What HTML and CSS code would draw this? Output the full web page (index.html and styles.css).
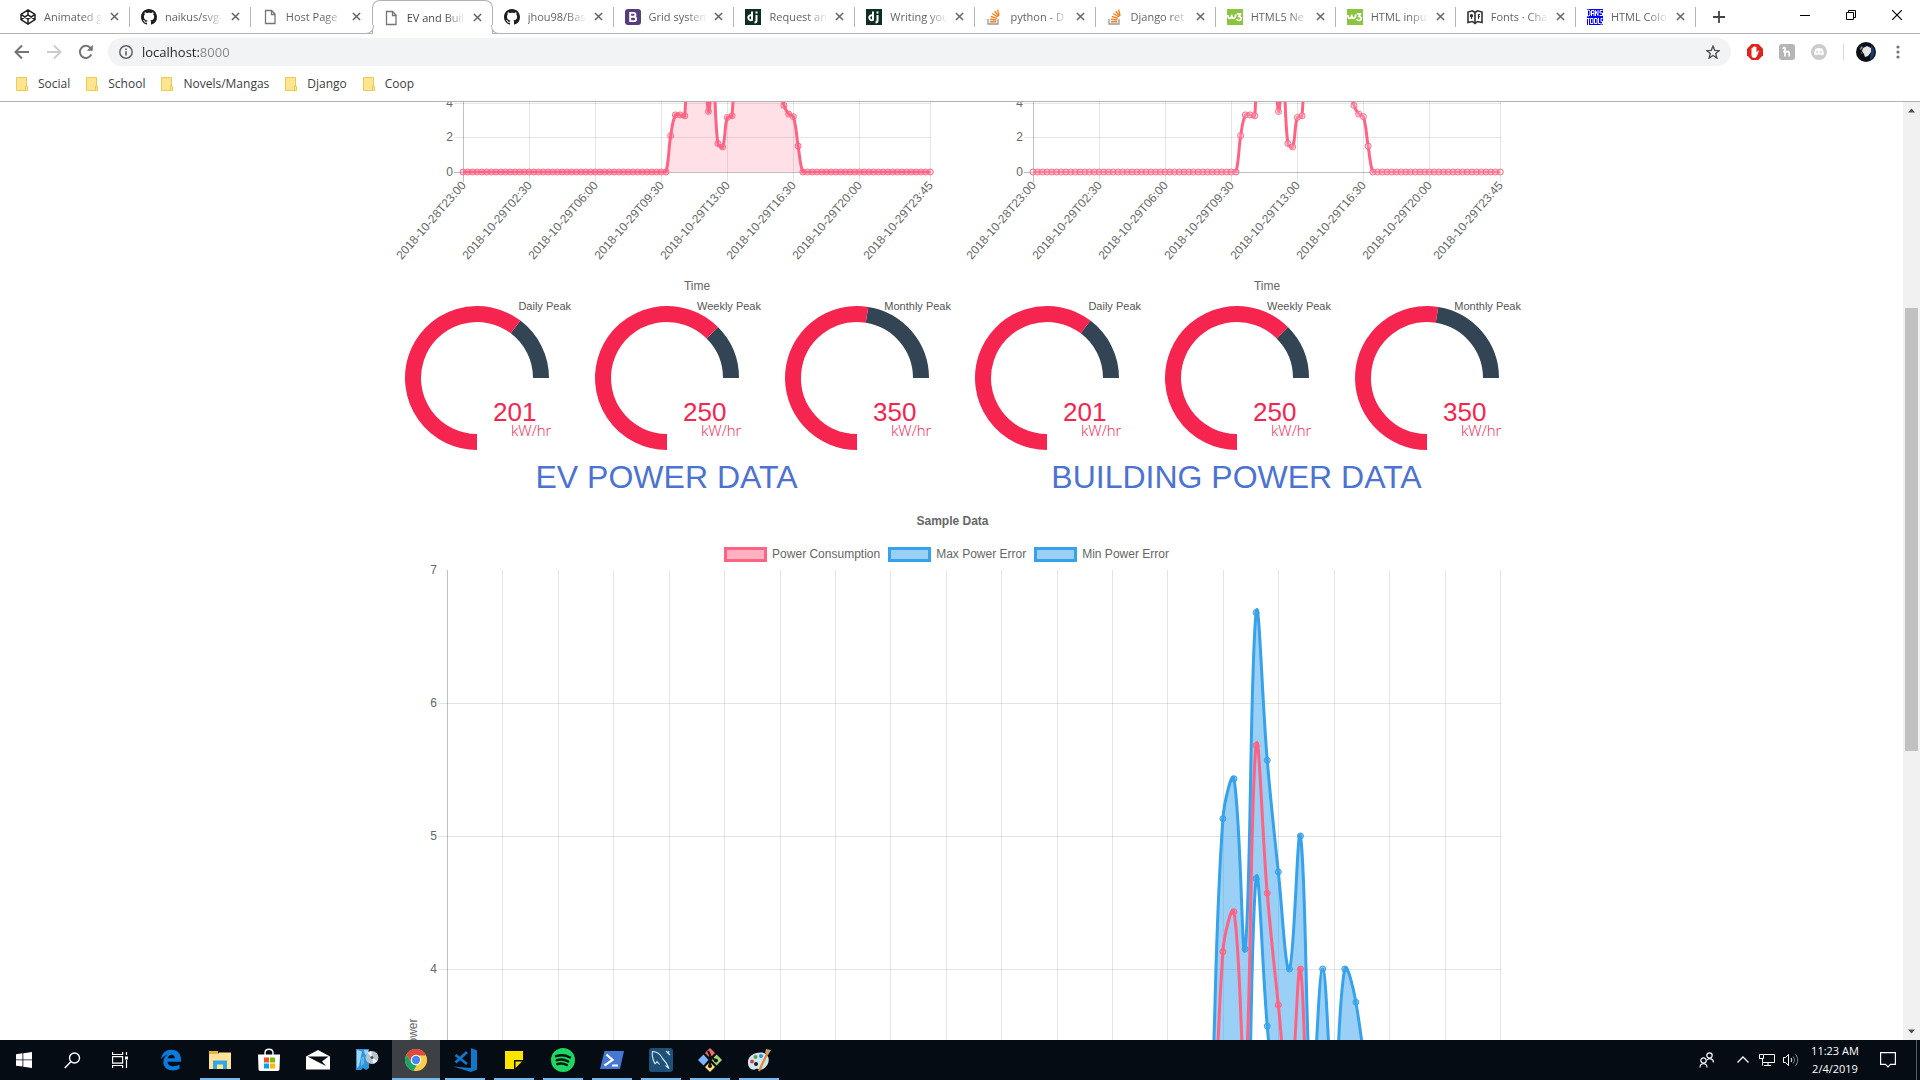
FILE: index.html
```html
<!DOCTYPE html>
<html lang="en">
<head>
<meta charset="utf-8">
<title>EV and Building Power</title>
<link rel="stylesheet" href="styles.css">
</head>
<body>
<svg class="defs" aria-hidden="true">
  <symbol id="i-github" viewBox="0 0 16 16"><path fill="#1b1f23" d="M8 0C3.58 0 0 3.58 0 8c0 3.54 2.29 6.53 5.47 7.59.4.07.55-.17.55-.38 0-.19-.01-.82-.01-1.49-2.01.37-2.53-.49-2.69-.94-.09-.23-.48-.94-.82-1.13-.28-.15-.68-.52-.01-.53.63-.01 1.08.58 1.23.82.72 1.21 1.87.87 2.33.66.07-.52.28-.87.51-1.07-1.78-.2-3.64-.89-3.64-3.95 0-.87.31-1.59.82-2.15-.08-.2-.36-1.02.08-2.12 0 0 .67-.21 2.2.82.64-.18 1.32-.27 2-.27s1.36.09 2 .27c1.53-1.04 2.2-.82 2.2-.82.44 1.1.16 1.92.08 2.12.51.56.82 1.27.82 2.15 0 3.07-1.87 3.75-3.65 3.95.29.25.54.73.54 1.48 0 1.07-.01 1.93-.01 2.2 0 .21.15.46.55.38A8.01 8.01 0 0 0 16 8c0-4.42-3.58-8-8-8z"/></symbol>
  <symbol id="i-page" viewBox="0 0 16 16"><path fill="none" stroke="#757575" stroke-width="1.3" d="M3.500 1.500h6l3.500 3.500v9.500h-9.500zM9.500 1.500v4h3.500"/></symbol>
  <symbol id="i-django" viewBox="0 0 16 16"><path fill="#0f2e22" d="M0 0h16v16H0z"/><path fill="none" stroke="#fff" stroke-width="2" d="M7 2.500v9.200M7 6.600C5 5.700 3.300 6.600 3.300 8.600s1.800 3 3.700 2.300M11.500 6v5.500c0 1.400-.6 2-2 2.100"/><path fill="#fff" d="M10.500 2.500h2v2h-2z"/></symbol>
  <symbol id="i-stack" viewBox="0 0 16 16"><path fill="none" stroke="#999" stroke-width="1.300" d="M2 10v5h10v-5"/><path fill="none" stroke="#f48024" stroke-width="1.400" d="M4 12.700h6.300M4.100 10.300l6.300.7M4.800 7.500l6 1.900M6.300 4.500l5.400 3.500M8.700 2.300l4 5M11.600.6l1.500 6"/></symbol>
  <symbol id="i-w3" viewBox="0 0 16 16"><path fill="#8bc540" d="M0 0h16v16H0z"/><path fill="none" stroke="#fff" stroke-width="1.700" stroke-linejoin="round" d="M.8 6c0 4.500 3.700 4.500 3.900.3.200 4.200 4 4 4-.8M9.800 4.800h4L11.700 7.500c3.500-.2 3.200 4.300.2 4-1 0-1.800-.5-2.200-1.300"/></symbol>
  <symbol id="i-x" viewBox="0 0 10 10"><path stroke="#5f6368" stroke-width="1.600" d="M1 1l8 8M9 1L1 9"/></symbol>
  <symbol id="i-folder" viewBox="0 0 12 14"><path fill="#ffe592" stroke="#edcb4e" d="M.5.500h10v9h1v4h-11z"/><path fill="none" stroke="#edcb4e" d="M9.500 13v-4h1.500"/></symbol>
</svg>

<header class="browser">
  <div class="tabstrip">
    <div class="tabs" role="tablist">
      <div class="tab"><svg class="fav" viewBox="0 0 16 16"><path fill="none" stroke="#222" stroke-width="1.500" stroke-linejoin="round" d="M8 .8l7 4.500v5.400l-7 4.500-7-4.500V5.300zM8 .8v4.700M8 10.500v4.700M1 5.300l7 4.900 7-4.900M1 10.700l7-4.900 7 4.900"/></svg><button class="title" role="tab">Animated g</button><button class="close" aria-label="Close"><svg><use href="#i-x"/></svg></button></div>
      <div class="tab"><svg class="fav"><use href="#i-github"/></svg><button class="title" role="tab">naikus/svg-</button><button class="close" aria-label="Close"><svg><use href="#i-x"/></svg></button></div>
      <div class="tab plain"><svg class="fav"><use href="#i-page"/></svg><button class="title" role="tab">Host Page</button><button class="close" aria-label="Close"><svg><use href="#i-x"/></svg></button></div>
      <div class="tab active"><svg class="fav"><use href="#i-page"/></svg><button class="title" role="tab" aria-selected="true">EV and Buil</button><button class="close" aria-label="Close"><svg><use href="#i-x"/></svg></button></div>
      <div class="tab"><svg class="fav"><use href="#i-github"/></svg><button class="title" role="tab">jhou98/Bas</button><button class="close" aria-label="Close"><svg><use href="#i-x"/></svg></button></div>
      <div class="tab"><svg class="fav" viewBox="0 0 16 16"><rect width="16" height="16" rx="3" fill="#563d7c"/><path fill="none" stroke="#fff" stroke-width="1.900" d="M5.200 3.900h3.300c2.600 0 2.600 3.800 0 3.800H5.200h3.600c3 0 3 4.400 0 4.400H5.200z"/></svg><button class="title" role="tab">Grid system</button><button class="close" aria-label="Close"><svg><use href="#i-x"/></svg></button></div>
      <div class="tab"><svg class="fav"><use href="#i-django"/></svg><button class="title" role="tab">Request an</button><button class="close" aria-label="Close"><svg><use href="#i-x"/></svg></button></div>
      <div class="tab"><svg class="fav"><use href="#i-django"/></svg><button class="title" role="tab">Writing you</button><button class="close" aria-label="Close"><svg><use href="#i-x"/></svg></button></div>
      <div class="tab"><svg class="fav"><use href="#i-stack"/></svg><button class="title" role="tab">python - D</button><button class="close" aria-label="Close"><svg><use href="#i-x"/></svg></button></div>
      <div class="tab"><svg class="fav"><use href="#i-stack"/></svg><button class="title" role="tab">Django ret</button><button class="close" aria-label="Close"><svg><use href="#i-x"/></svg></button></div>
      <div class="tab"><svg class="fav"><use href="#i-w3"/></svg><button class="title" role="tab">HTML5 Ne</button><button class="close" aria-label="Close"><svg><use href="#i-x"/></svg></button></div>
      <div class="tab"><svg class="fav"><use href="#i-w3"/></svg><button class="title" role="tab">HTML inpu</button><button class="close" aria-label="Close"><svg><use href="#i-x"/></svg></button></div>
      <div class="tab"><svg class="fav" viewBox="0 0 16 16"><path fill="none" stroke="#333" stroke-width="1.600" d="M8 3.500L5.500 1.800 1 3v10.500l4.500-1L8 14.500l2.500-2 4.500 1V3l-4.500-1.200zM8 3.500v11"/><path fill="none" stroke="#333" stroke-width="1.200" d="M4.500 5v5M3.500 5.500v2h2v-2M11.500 10V5.500h1.500M11.500 7.500h1.500"/></svg><button class="title" role="tab">Fonts · Cha</button><button class="close" aria-label="Close"><svg><use href="#i-x"/></svg></button></div>
      <div class="tab"><svg class="fav" viewBox="0 0 16 16"><path fill="#00f" d="M0 0h16v16H0z"/><path fill="none" stroke="#fff" d="M.5 1v6H2l1-1V2L2 1zM4.500 7V1.500H7V7M4.500 4.500H7M8.500 7V1.500L11 6.500V1M15.500 1.500H13v2.500h2.500v2.500H12.500M0 9.500h2.500M1.500 9.500V16M3.500 9.500H6v5H3.500zM7.500 9.500H10v5H7.500zM11.500 9v5.500h2M15.500 9.500h-1.500v3h1.500v2.500h-2"/></svg><button class="title" role="tab">HTML Colo</button><button class="close" aria-label="Close"><svg><use href="#i-x"/></svg></button></div>
    </div>
    <button class="newtab" aria-label="New tab"><svg width="12" height="12" viewBox="0 0 12 12"><path stroke="#444" stroke-width="1.800" d="M6 0v12M0 6h12"/></svg></button>
    <div class="wincontrols">
      <button aria-label="Minimize"><svg width="10" height="10" viewBox="0 0 10 10"><path stroke="#000" d="M0 5.500h10"/></svg></button>
      <button aria-label="Restore"><svg width="10" height="10" viewBox="0 0 10 10"><path fill="none" stroke="#000" d="M.5 2.500h7v7h-7zM2.500 2.500v-2h7v7h-2"/></svg></button>
      <button aria-label="Close window"><svg width="10" height="10" viewBox="0 0 10 10"><path stroke="#000" stroke-width="1.200" d="M0 0l10 10M10 0L0 10"/></svg></button>
    </div>
  </div>

  <div class="toolbar">
    <nav class="navbuttons">
      <button aria-label="Back"><svg width="16" height="16" viewBox="0 0 16 16"><path fill="none" stroke="#757575" stroke-width="2" d="M15 8H2M8 1.500L1.500 8 8 14.500"/></svg></button>
      <button aria-label="Forward"><svg width="16" height="16" viewBox="0 0 16 16"><path fill="none" stroke="#ccc" stroke-width="2" d="M1 8h13M8 1.500L14.500 8 8 14.500"/></svg></button>
      <button aria-label="Reload"><svg width="16" height="16" viewBox="0 0 16 16"><path fill="none" stroke="#757575" stroke-width="2" d="M13.300 10.500A6 6 0 1 1 12.500 4"/><path fill="#757575" d="M14.800.8v6H8.800z"/></svg></button>
    </nav>
    <div class="omnibox">
      <svg width="14" height="14" viewBox="0 0 14 14"><circle cx="7" cy="7" r="6.200" fill="none" stroke="#5f6368" stroke-width="1.500"/><path fill="#5f6368" d="M6.200 6.200h1.600v4.300H6.200zM6.200 3.500h1.600v1.600H6.200z"/></svg>
      <input type="text" value="localhost:8000" aria-label="Address">
      <button aria-label="Bookmark"><svg width="14" height="14" viewBox="0 0 14 14"><path fill="none" stroke="#4a4d51" stroke-width="1.300" d="M7 1l1.700 4.300 4.500.3-3.500 2.900 1.200 4.500L7 10.500 3.100 13l1.200-4.500L.8 5.600l4.500-.3z"/></svg></button>
    </div>
    <div class="extensions">
      <button aria-label="Ad blocker"><svg width="16" height="16" viewBox="0 0 16 16"><path fill="#e2231a" d="M4.700 0h6.600L16 4.700v6.600L11.300 16H4.700L0 11.300V4.700z"/><path fill="#fff" d="M4.500 8.500V4.400c0-.9 1.200-.9 1.200 0V7V3.300c0-.9 1.300-.9 1.300 0V7V2.800c0-.9 1.300-.9 1.300 0V7v-3.500c0-.9 1.200-.9 1.200 0v5l1.300-1.600c.6-.7 1.400-.1 1 .7L10 12c-.6 1.200-1.300 2-2.600 2-1.900 0-2.900-1.200-2.900-3z"/></svg></button>
      <button aria-label="Coupons"><svg width="16" height="16" viewBox="0 0 16 16"><rect width="16" height="16" rx="3" fill="#b5b5b5"/><path fill="none" stroke="#fff" stroke-width="1.700" d="M6 12.500V4.500c0-1.500-1.800-1-1.800.5M4 7.500h6.500M6 12V9c0-1.800 4.200-1.800 4.200 0v3.500"/></svg></button>
      <button aria-label="Chat"><svg width="16" height="16" viewBox="0 0 16 16"><circle cx="8" cy="8" r="8" fill="#ccc"/><path fill="#fff" d="M4.700 4.700c2-1 4.600-1 6.600 0 1 1.700 1.600 3.400 1.500 5.600-.8.8-1.700 1-2.500 1l-.6-.8H6.300l-.6.8c-.8 0-1.700-.2-2.500-1 0-2.200.5-3.900 1.500-5.600z"/><circle cx="6.200" cy="8" r="1" fill="#ccc"/><circle cx="9.800" cy="8" r="1" fill="#ccc"/></svg></button>
      <span class="rule"></span>
      <button aria-label="Profile"><svg width="20" height="20" viewBox="0 0 20 20"><circle cx="10" cy="10" r="10" fill="#0b0f18"/><path fill="#1d3a66" d="M15 3a9 9 0 0 1-1 15z"/><path fill="#e4e4e4" d="M7 6l4-2 4 2v4l-3 4-3 1-1-3-2-3z"/><path fill="#888" d="M3.500 7l2-3 1.500 1-2 3zM5 10l1.500 1-1 1z"/></svg></button>
      <button aria-label="Menu"><svg width="4" height="16" viewBox="0 0 4 16"><g fill="#757575"><circle cx="2" cy="3" r="1.600"/><circle cx="2" cy="8" r="1.600"/><circle cx="2" cy="13" r="1.600"/></g></svg></button>
    </div>
  </div>

  <nav class="bookmarks">
    <a href="#"><svg><use href="#i-folder"/></svg>Social</a>
    <a href="#"><svg><use href="#i-folder"/></svg>School</a>
    <a href="#"><svg><use href="#i-folder"/></svg>Novels/Mangas</a>
    <a href="#"><svg><use href="#i-folder"/></svg>Django</a>
    <a href="#"><svg><use href="#i-folder"/></svg>Coop</a>
  </nav>
</header>

<div class="viewport">
  <main class="page">
    <div class="columns">
      <section class="col">
        <svg class="daily" data-fill="rgba(255,99,132,0.2)" viewBox="0 0 570 196"></svg>
        <div class="gauges"></div>
        <h2>EV POWER DATA</h2>
      </section>
      <section class="col">
        <svg class="daily" data-fill="none" viewBox="0 0 570 196"></svg>
        <div class="gauges"></div>
        <h2>BUILDING POWER DATA</h2>
      </section>
    </div>
    <section class="sample">
      <h3>Sample Data</h3>
      <ul class="legend">
        <li><i class="swatch red"></i>Power Consumption</li>
        <li><i class="swatch"></i>Max Power Error</li>
        <li><i class="swatch"></i>Min Power Error</li>
      </ul>
      <svg class="band" viewBox="0 0 1140 960"></svg>
    </section>
  </main>
  <div class="scrollbar">
    <svg width="17" height="17" viewBox="0 0 17 17"><path fill="#505050" d="M8.500 6.500l3.500 4H5z"/></svg>
    <div class="track"><div class="thumb"></div></div>
    <svg width="17" height="17" viewBox="0 0 17 17"><path fill="#505050" d="M5 6.500h7l-3.500 4z"/></svg>
  </div>
</div>

<footer class="taskbar">
  <div class="system">
    <button aria-label="Start"><svg width="16" height="16" viewBox="0 0 16 16"><path fill="#fff" d="M0 2.200l6.500-.9v6.200H0zM7.300 1.200L16 0v7.500H7.300zM0 8.300h6.500v6.300L0 13.700zM7.300 8.300H16V16l-8.700-1.300z"/></svg></button>
    <button aria-label="Search"><svg width="17" height="17" viewBox="0 0 17 17"><circle cx="10.500" cy="6" r="5" fill="none" stroke="#fff" stroke-width="1.400"/><path stroke="#fff" stroke-width="1.500" d="M7 9.500L.8 16"/></svg></button>
    <button aria-label="Task view"><svg width="16" height="16" viewBox="0 0 16 16"><path fill="none" stroke="#fff" stroke-width="1.200" d="M.6 0v2.500h10V0M.6 4.600h10v6.500H.6zM.6 16v-2.500h10V16M14.500 0v3M14.500 8v8"/><path fill="#fff" d="M13 4.500h3v3h-3z"/></svg></button>
  </div>
  <div class="apps">
    <button aria-label="Edge"><svg width="22" height="22" viewBox="0 0 22 22"><path fill="#0a7bdd" d="M1 10.500C1.800 4 6 .8 11.500.8c6 0 9.500 4 9.500 9.700v2.200H7.500c.2 5 7.500 5.700 12 2.800v4.200C14 23 3.500 22 3.300 13c0-3.500 1.800-6.200 4.700-7.600-3 .6-5.500 2.300-7 5.100zM7.700 9.200h7.200c0-4.800-6.300-4.700-7.200 0z"/></svg></button>
    <button class="open" aria-label="File Explorer"><svg width="22" height="20" viewBox="0 0 22 20"><path fill="#e8b33c" d="M0 1h9v4H0z"/><path fill="#ffe399" d="M0 4h9l1-1.500h12V19H0z"/><path fill="#31a7e8" d="M4 10.500h14V19h-4v-4.500H8V19H4z"/></svg></button>
    <button aria-label="Store"><svg width="24" height="24" viewBox="0 0 24 24"><path fill="none" stroke="#fff" stroke-width="1.400" d="M8 7V5c0-5 8-5 8 0v2"/><path fill="#fff" d="M1 6.500h22L22.500 21c0 1-.5 2-2 2h-17c-1.500 0-2-1-2-2z"/><path fill="#f25022" d="M7 9.500h5v5H7z"/><path fill="#7fba00" d="M13 9.500h5v5h-5z"/><path fill="#00a4ef" d="M7 15.500h5v5H7z"/><path fill="#ffb900" d="M13 15.500h5v5h-5z"/></svg></button>
    <button aria-label="Mail"><svg width="24" height="20" viewBox="0 0 24 20"><path fill="#fff" d="M12 0l12 6.500V19.500H0V6.500z"/><path fill="#050c14" d="M1.500 6.500h21l-6.500 5 4 4.500-9-4.500z"/></svg></button>
    <button aria-label="Installer"><svg width="24" height="24" viewBox="0 0 24 24"><path fill="#2d94dd" d="M1 1h13v19l-3 2-3-2-2 2H1z"/><path fill="#9ed7fa" d="M2 2l5 1.500L4 18l-2 2zM9 2h4v3l-3 2z"/><path fill="#59b6f0" d="M6 10l3-2v8l-3 2z"/><circle cx="17" cy="9.500" r="6.500" fill="#b9c4cd"/><path fill="#f4f6fa" d="M17 9.500l-4.500-5 4-1.500zM17 9.500l5.500 3.500-4 2.700z"/><circle cx="17" cy="9.500" r="1.500" fill="#456"/></svg></button>
    <button class="open current" aria-label="Chrome"><svg width="24" height="24" viewBox="0 0 24 24"><circle cx="12" cy="12" r="11" fill="#fccd48"/><path fill="#dd4b3e" d="M2.500 6.500A11 11 0 0 1 22 7.500H12L7 14z"/><path fill="#1da362" d="M2.500 6.500l5 8.500 5 2.500-3 5.300A11 11 0 0 1 2.500 6.500z"/><circle cx="12" cy="12" r="5.200" fill="#fff"/><circle cx="12" cy="12" r="4.200" fill="#4587f3"/></svg></button>
    <button class="open" aria-label="Visual Studio Code"><svg width="24" height="24" viewBox="0 0 24 24"><path fill="#1177c8" d="M18 0l6 2.500v19L18 24 0 18.500l18 1.500z"/><path fill="none" stroke="#1177c8" stroke-width="2.800" d="M14 4L2.500 14.500M2.500 7L14 16z"/></svg></button>
    <button class="open" aria-label="Sticky Notes"><svg width="18" height="18" viewBox="0 0 18 18"><path fill="#ffe400" d="M0 0h18v9H9v9H0z"/><path fill="#ffe400" d="M10.500 10.500H17L10.500 17z"/></svg></button>
    <button class="open" aria-label="Spotify"><svg width="24" height="24" viewBox="0 0 24 24"><circle cx="12" cy="12" r="12" fill="#1ed760"/><path fill="none" stroke="#07140c" stroke-linecap="round" stroke-width="2.400" d="M5 8.200c5-1.500 10-1 14 1.300M5.700 12.200c4-1.200 8-.7 11.500 1.300M6.300 16c3.500-.9 6.500-.6 9.500 1"/></svg></button>
    <button class="open" aria-label="PowerShell"><svg width="24" height="18" viewBox="0 0 24 18"><path fill="#4578d4" d="M4.500 0H24l-4 18H0z"/><path fill="none" stroke="#fff" stroke-width="2.200" d="M6.500 3.500l6 5.500-8 5.500M12 14.500h6"/></svg></button>
    <button class="open" aria-label="MySQL Workbench"><svg width="24" height="24" viewBox="0 0 24 24"><rect width="24" height="24" rx="3" fill="#1f5078"/><path fill="none" stroke="#d5e6f0" stroke-width="1.100" d="M6 16c-2-4-3-10-2.500-12.500 5 0 8 3 10 7 3 3 5 6 6.500 10l-3.500-3M6 16l2-2.500 2.500 3M17 3l4 4M20 3l-1 3"/></svg></button>
    <button class="open" aria-label="Git Bash"><svg width="24" height="24" viewBox="0 0 24 24"><path fill="#f26d6d" d="M12 0l5 5-5 5-5-5z"/><path fill="#80b3ff" d="M5.500 6.500l5 5.500-5 5.500L0 12z"/><path fill="#a3d977" d="M18.500 6.500L24 12l-5.500 5.500-5-5.500z"/><path fill="#ffdc73" d="M12 14l5 5-5 5-5-5z"/><path fill="none" stroke="#111" stroke-width="2.200" d="M10 3l2 4v12M12 8l6 5"/><circle cx="12" cy="18" r="2" fill="#111"/><circle cx="18" cy="12.500" r="2" fill="#111"/></svg></button>
    <button class="open" aria-label="Paint"><svg width="24" height="24" viewBox="0 0 24 24"><path fill="#d2e6f2" d="M1 15C0 8 9 3 17 5c7 3 6 12-1 16-3 2-4-1-7 0C5 23 1 20 1 15z"/><circle cx="5" cy="13.500" r="2" fill="#e0453a"/><circle cx="8.500" cy="9" r="2" fill="#52a844"/><circle cx="14" cy="8" r="2" fill="#3a86d8"/><circle cx="9" cy="16" r="2" fill="#16202a"/><path stroke="#e28a2c" stroke-width="2.200" d="M12 23L20 6"/><path fill="#c9a06a" d="M18 5l1-4 5 1-3 5z"/></svg></button>
  </div>
  <div class="tray">
    <button class="people" aria-label="People"><svg width="16" height="16" viewBox="0 0 16 16"><g fill="none" stroke="#fff" stroke-width="1.200"><circle cx="10.500" cy="3.500" r="2.700"/><circle cx="4.500" cy="8.500" r="2.700"/><path d="M1 15.500c0-5 7-5 7 0M8 8c2-2.500 6.500-1.500 6.500 2.500"/></g></svg></button>
    <button aria-label="Hidden icons"><svg width="12" height="12" viewBox="0 0 12 12"><path fill="none" stroke="#fff" stroke-width="1.300" d="M.5 8.500L6 3l5.500 5.500"/></svg></button>
    <button aria-label="Network"><svg width="16" height="14" viewBox="0 0 16 14"><path fill="none" stroke="#fff" d="M5 1.500h10.500v8H3.500V6M.5 1.500h4v4h-4zM5 12.500h7M9 9.500v3M3.500 9.500v3"/></svg></button>
    <button aria-label="Volume"><svg width="16" height="14" viewBox="0 0 16 14"><path fill="none" stroke="#fff" d="M.5 4.500h2l3-3v11l-3-3h-2zM8 5c1 1.500 1 2.500 0 4"/><path fill="none" stroke="#8a8f94" d="M10 3.500c2 2.500 2 4.500 0 7M12.500 1.500c3 3.500 3 7.500 0 11"/></svg></button>
    <div class="clock"><time>11:23 AM</time><span>2/4/2019</span></div>
    <button class="action" aria-label="Action center"><svg width="16" height="16" viewBox="0 0 16 16"><path fill="none" stroke="#fff" stroke-width="1.200" d="M.6.600h14.800v11.800H10.500L8 15l-2.500-2.600H.6z"/></svg></button>
  </div>
</footer>
<script src="charts.js"></script>
</body>
</html>
```
FILE: charts.js
```js
const NS = 'http://www.w3.org/2000/svg';
const RED = '#ff6384';
const BLUE = '#36a2eb';

function add(parent, name, attrs, text) {
  const el = document.createElementNS(NS, name);
  for (const key in attrs) el.setAttribute(key, attrs[key]);
  if (text) el.textContent = text;
  parent.appendChild(el);
  return el;
}

/* Bezier segments through the points, tension 0.4. */
function spline(pts, lo, hi) {
  const clamp = v => Math.max(lo, Math.min(hi, v));
  const c = pts.map((p, i) => {
    const a = pts[i - 1] || p, b = pts[i + 1] || p;
    const d1 = Math.hypot(p[0] - a[0], p[1] - a[1]);
    const d2 = Math.hypot(b[0] - p[0], b[1] - p[1]);
    const f1 = 0.4 * d1 / (d1 + d2 || 1), f2 = 0.4 * d2 / (d1 + d2 || 1);
    return [
      p[0] - f1 * (b[0] - a[0]), clamp(p[1] - f1 * (b[1] - a[1])),
      p[0] + f2 * (b[0] - a[0]), clamp(p[1] + f2 * (b[1] - a[1]))
    ];
  });
  let d = '';
  for (let i = 1; i < pts.length; i++) {
    d += `C${c[i - 1][2]} ${c[i - 1][3]} ${c[i][0]} ${c[i][1]} ${pts[i][0]} ${pts[i][1]}`;
  }
  return d;
}

function gridLine(svg, x1, y1, x2, y2, alpha) {
  add(svg, 'line', { x1, y1, x2, y2, stroke: `rgba(0,0,0,${alpha || 0.1})` });
}

function drawDaily(svg) {
  const x0 = 81, step = 4.72, y0 = 70, unit = 17.3;
  const values = new Array(100).fill(0);
  Object.assign(values, {
    44: 2.1, 45: 3.3, 46: 3.3, 47: 3.25, 48: 12, 49: 13, 50: 13, 51: 8, 52: 3.5, 53: 5.5,
    54: 1.65, 55: 1.45, 56: 3.15, 57: 3.25, 58: 10, 59: 12, 60: 12, 61: 12, 62: 12,
    63: 12, 64: 12, 65: 12, 66: 8, 67: 5, 68: 3.85, 69: 3.35, 70: 3.2, 71: 1.5
  });
  const labels = ['28T23:00', '29T02:30', '29T06:00', '29T09:30', '29T13:00', '29T16:30', '29T20:00', '29T23:45'];
  labels.forEach((label, i) => {
    const x = Math.round(x0 + step * (i === 7 ? 99 : i * 14)) + 0.5;
    gridLine(svg, x, 0, x, 80, i ? 0.1 : 0.25);
    add(svg, 'text', { class: 'end', transform: `translate(${x} 81) rotate(-49)`, dy: '4' }, '2018-10-' + label);
  });
  [0, 2, 4].forEach(v => {
    const y = Math.round(y0 - v * unit) + 0.5;
    gridLine(svg, 72, y, 549, y, v ? 0.1 : 0.25);
    add(svg, 'text', { class: 'end', x: 71, y: y + 3 }, String(v));
  });
  const pts = values.map((v, i) => [x0 + i * step, y0 - v * unit]);
  const line = `M${pts[0]}` + spline(pts, -400, y0);
  add(svg, 'path', { d: `${line}V${y0}H${x0}Z`, fill: svg.dataset.fill });
  add(svg, 'path', { d: line, fill: 'none', stroke: RED, 'stroke-width': 3 });
  pts.forEach(p => add(svg, 'circle', {
    cx: p[0], cy: p[1], r: 3, stroke: RED,
    fill: svg.dataset.fill === 'none' ? 'rgba(255,255,255,0.2)' : svg.dataset.fill
  }));
  add(svg, 'text', { class: 'mid', x: 315, y: 188 }, 'Time');
}

function drawGauge(box, label, value, max) {
  const svg = add(box, 'svg', { viewBox: '0 0 190 157' });
  const at = deg => {
    const a = (deg + 90) * Math.PI / 180;
    return `${95 + 64 * Math.cos(a)} ${80 + 64 * Math.sin(a)}`;
  };
  const split = 270 * value / max;
  const arc = (from, to, color) => add(svg, 'path', {
    d: `M${at(from)}A64 64 0 ${to - from > 180 ? 1 : 0} 1 ${at(to)}`,
    fill: 'none', stroke: color, 'stroke-width': 16
  });
  arc(split, 270, '#334455');
  arc(0, split, '#f52550');
  add(svg, 'text', { class: 'end peak', x: 189, y: 12 }, label);
  add(svg, 'text', { class: 'value', x: 111, y: 123 }, String(value));
  add(svg, 'text', { class: 'unit', x: 129, y: 138 }, 'kW/hr');
}

function drawBand(svg) {
  const x0 = 65, step = 1053 / 95, y7 = 5, unit = 133;
  const Y = v => y7 + (7 - v) * unit;
  for (let i = 0; i < 20; i++) {
    const x = Math.round(x0 + i * step * 5) + 0.5;
    gridLine(svg, x, y7, x, Y(0), i ? 0.1 : 0.25);
  }
  for (let v = 7; v >= 0; v--) {
    const y = Y(v) + 0.5;
    if (v < 7) gridLine(svg, 56, y, 1119, y);
    add(svg, 'text', { class: 'end', x: 55, y: y + 3 }, String(v));
  }
  add(svg, 'text', { class: 'mid', transform: `translate(35 ${Y(3.5)}) rotate(-90)` }, 'Power');
  const max = new Array(96).fill(1);
  Object.assign(max, {
    69: 3, 70: 5.13, 71: 5.43, 72: 4.15, 73: 6.68, 74: 5.57, 75: 4.73, 76: 4,
    77: 5, 78: 3, 79: 4, 80: 3, 81: 4, 82: 3.75, 83: 3
  });
  const series = drop => max.map((v, i) => [x0 + i * step, Y(v - drop)]);
  const top = series(0), mid = series(1), low = series(2);
  const back = low.slice().reverse();
  add(svg, 'path', {
    d: `M${top[0]}${spline(top, y7, 2000)}L${back[0]}${spline(back, y7, 2000)}Z`,
    fill: 'rgba(54,162,235,0.5)'
  });
  [[low, BLUE], [top, BLUE], [mid, RED]].forEach(([pts, color]) => {
    add(svg, 'path', { d: `M${pts[0]}${spline(pts, y7, 2000)}`, fill: 'none', stroke: color, 'stroke-width': 3 });
    pts.forEach(p => add(svg, 'circle', { cx: p[0], cy: p[1], r: 3, fill: color, 'fill-opacity': 0.5, stroke: color }));
  });
}

document.querySelectorAll('.daily').forEach(drawDaily);
document.querySelectorAll('.gauges').forEach(box => {
  drawGauge(box, 'Daily Peak', 201, 250);
  drawGauge(box, 'Weekly Peak', 250, 300);
  drawGauge(box, 'Monthly Peak', 350, 500);
});
drawBand(document.querySelector('.band'));
```
FILE: styles.css
```css
* { box-sizing: border-box; }
body {
  margin: 0;
  height: 100vh;
  display: flex;
  flex-direction: column;
  overflow: hidden;
  background: #fff;
  font-family: "Open Sans", "Noto Sans", sans-serif;
  font-size: 11px;
  color: #5f6368;
}
button {
  padding: 0;
  border: 0;
  background: none;
  font: inherit;
  color: inherit;
  display: flex;
  align-items: center;
  justify-content: center;
}
svg { display: block; flex: none; }
.defs { position: absolute; width: 0; height: 0; }

/* Browser frame */
.browser { border-bottom: 1px solid #b2b2b2; }
.tabstrip {
  display: flex;
  height: 34px;
  border-bottom: 1px solid #b2b2b2;
}
.tabs { flex: 1; display: flex; padding-left: 9px; min-width: 0; }
.tab {
  flex: 120 1 0;
  min-width: 0;
  display: flex;
  align-items: center;
  padding: 0 11px;
  position: relative;
}
.tab:nth-child(-n+7) { flex-grow: 121; }
.tab::after {
  content: "";
  position: absolute;
  right: 0;
  top: 7px;
  width: 1px;
  height: 20px;
  background: #b5b5b5;
}
.tab.plain::after { display: none; }
.fav { width: 16px; height: 16px; margin-right: 8px; }
.title {
  flex: 1;
  min-width: 0;
  overflow: hidden;
  white-space: nowrap;
  justify-content: flex-start;
  -webkit-mask-image: linear-gradient(to right, #000 65%, transparent 100%);
  mask-image: linear-gradient(to right, #000 65%, transparent 100%);
}
.close { margin-left: 7px; }
.close svg { width: 9px; height: 9px; }
.tab.active {
  height: 34px;
  background: #fff;
  border: 1px solid #b2b2b2;
  border-bottom: 0;
  border-radius: 8px 8px 0 0;
  padding: 0 10px;
  color: #45494d;
}
.tab.active::before,
.tab.active::after {
  content: "";
  position: absolute;
  top: auto;
  bottom: 0;
  width: 8px;
  height: 8px;
  background: #fff;
  border-bottom: 1px solid #b2b2b2;
}
.tab.active::before { left: -8px; border-right: 1px solid #b2b2b2; border-radius: 0 0 8px 0; }
.tab.active::after { right: -8px; border-left: 1px solid #b2b2b2; border-radius: 0 0 0 8px; }
.newtab { width: 46px; }
.wincontrols { display: flex; justify-content: flex-end; width: 178px; height: 29px; }
.wincontrols button { width: 46px; }

.toolbar { display: flex; align-items: center; height: 36px; padding: 0 20px 0 14px; }
.navbuttons { display: flex; gap: 16px; }
.omnibox {
  flex: 1;
  height: 28px;
  margin: 0 16px 0 14px;
  padding: 0 11px;
  display: flex;
  align-items: center;
  gap: 9px;
  background: #f1f3f4;
  border-radius: 14px;
}
.omnibox input {
  flex: 1;
  min-width: 0;
  padding: 0;
  border: 0;
  outline: 0;
  font: inherit;
  font-size: 13px;
  background: linear-gradient(to right, #202124 57px, #80868b 57px);
  background-clip: text;
  -webkit-background-clip: text;
  color: transparent;
}
.extensions { display: flex; align-items: center; gap: 16px; }
.rule { width: 1px; height: 16px; background: #d5d7da; }
.extensions .rule + button { margin-left: -4px; }
.extensions button:last-child { margin-left: 4px; }

.bookmarks { display: flex; gap: 16px; height: 31px; padding: 0 16px 4px; font-size: 12px; }
.bookmarks a {
  display: flex;
  align-items: center;
  gap: 10px;
  color: #3c4043;
  text-decoration: none;
}
.bookmarks svg { width: 12px; height: 14px; }

/* Page */
.viewport { flex: 1; min-height: 0; display: flex; overflow: hidden; }
.page {
  flex: 1;
  min-width: 0;
  overflow: hidden;
  font-family: "Liberation Sans", Arial, sans-serif;
  font-size: 12px;
  color: #666;
}
.columns, .sample { max-width: 1140px; margin: 0 auto; }
.columns { display: flex; }
.col { flex: 1; min-width: 0; }
.daily, .band { width: 100%; }
.page text { fill: #666; }
.gauges { display: flex; }
.gauges svg { flex: 1 1 0; min-width: 0; }
.end { text-anchor: end; }
.mid { text-anchor: middle; }
.page .peak { font-size: 11px; fill: #555; }
.page .value { font-size: 26px; fill: #f52550; }
.page .unit { font-family: "Open Sans", sans-serif; font-weight: 300; font-size: 15px; fill: #f52550; }
h2 {
  margin: 0;
  font-size: 32px;
  line-height: 44px;
  font-weight: 400;
  text-align: center;
  color: #4c72d2;
}
.sample h3 { margin: 0; padding: 14px 0 0 2px; font-size: 12px; line-height: 16px; text-align: center; }
.legend {
  list-style: none;
  margin: 0;
  padding: 17px 0 3px;
  display: flex;
  justify-content: center;
}
.legend li { display: flex; align-items: center; padding-right: 8px; line-height: 16px; }
.legend li:last-child { padding-right: 10px; }
.swatch {
  width: 43px;
  height: 15px;
  margin-right: 5px;
  border: 3px solid #36a2eb;
  background: #9ad0f5;
}
.swatch.red { border-color: #ff6384; background: #ffb1c1; }

.scrollbar { display: flex; flex-direction: column; width: 17px; background: #f1f1f1; }
.track { flex: 1; padding: 189px 2px 0; }
.thumb { height: 62%; background: #c1c1c1; }

/* Taskbar */
.taskbar { display: flex; height: 40px; background: #050c14; color: #fff; }
.taskbar button { width: 48px; height: 40px; position: relative; }
.system { display: flex; }
.apps { display: flex; gap: 1px; margin-left: 3px; }
.open::after {
  content: "";
  position: absolute;
  left: 4px;
  right: 4px;
  bottom: 0;
  height: 2px;
  background: #76b9ed;
}
.taskbar .current { background: #3d4146; }
.current::after { left: 0; right: 0; }
.tray { display: flex; align-items: center; margin: 0 3px 0 auto; border-right: 1px solid #5a6066; }
.tray button { width: 24px; }
.tray .people { margin-right: 12px; }
.clock {
  width: 64px;
  display: flex;
  flex-direction: column;
  align-items: center;
  line-height: 18px;
}
.tray .action { width: 41px; margin-right: 8px; }
```
